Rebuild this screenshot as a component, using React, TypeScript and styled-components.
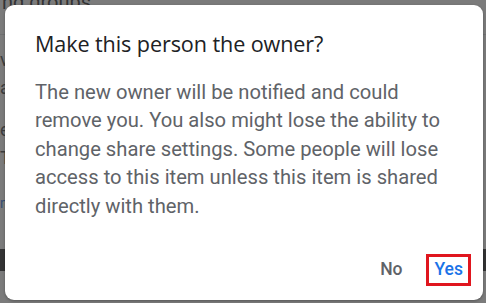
import { createGlobalStyle, styled } from "styled-components";

const GlobalStyle = createGlobalStyle`
  html, body {
    margin: 0;
    padding: 0;
    width: 486px;
    height: 303px;
    overflow: hidden;
    background: #7c7c7c;
    font-family: Roboto, "Liberation Sans", Arial, sans-serif;
  }
`;

const Page = styled.div`
  position: relative;
  width: 486px;
  height: 303px;
  overflow: hidden;
  background: #ffffff;
`;

const PageContent = styled.div`
  display: flex;
  flex-direction: column;
  height: 100%;
`;

const PageHeading = styled.div`
  margin-top: -9px;
  padding-left: 2px;
  font-size: 20px;
  line-height: 22px;
  color: #202124;
`;

const Divider = styled.div`
  margin-top: 21px;
  height: 1px;
  background: #dadce0;
`;

const PageLines = styled.div`
  display: flex;
  flex-direction: column;
  gap: 14px;
  padding: 18px 0 0 0;
  font-size: 18px;
  color: #3c4043;
  line-height: 14px;
`;

const PageLink = styled.div`
  margin-top: 30px;
  font-size: 14px;
  color: #1a73e8;
`;

const DarkBar = styled.div`
  margin-top: 38px;
  height: 22px;
  background: #202124;
`;

const Overlay = styled.div`
  position: absolute;
  inset: 0;
  background: rgba(60, 60, 60, 0.68);
  display: flex;
  padding: 5px 3px 3px 5px;
  box-sizing: border-box;
`;

const Dialog = styled.div`
  flex: 1;
  background: #ffffff;
  border-radius: 9px;
  padding: 25px 12px 14px 30px;
  display: flex;
  flex-direction: column;
  box-sizing: border-box;
  box-shadow: 0 1px 3px rgba(0, 0, 0, 0.3);
`;

const Title = styled.h2`
  margin: 0;
  font-family: "Open Sans", Roboto, sans-serif;
  font-weight: 400;
  font-size: 21.6px;
  line-height: 28px;
  color: #202124;
  letter-spacing: -0.1px;
`;

const Body = styled.p`
  margin: 20px 0 0 0;
  max-width: 410px;
  font-size: 20.2px;
  line-height: 28.4px;
  color: #5f6368;
`;

const Actions = styled.div`
  margin-top: auto;
  display: flex;
  justify-content: flex-end;
  align-items: center;
  gap: 16px;
`;

const ActionButton = styled.button<{ $primary?: boolean; $marked?: boolean }>`
  font-family: Roboto, "Liberation Sans", sans-serif;
  font-size: 17.5px;
  font-weight: 500;
  background: none;
  cursor: pointer;
  color: ${(p) => (p.$primary ? "#1a73e8" : "#5f6368")};
  border: 3px solid ${(p) => (p.$marked ? "#e0161e" : "transparent")};
  padding: 2px 5px 3px 5px;
  line-height: 21px;
`;

const App = (): React.ReactElement => {
  return (
    <>
      <GlobalStyle />
      <Page>
        <PageContent>
          <PageHeading>nd groups</PageHeading>
          <Divider />
          <PageLines>
            <span>v:</span>
            <span>a</span>
            <span> </span>
            <span>e</span>
            <span>T</span>
          </PageLines>
          <PageLink>m</PageLink>
          <DarkBar />
        </PageContent>
        <Overlay>
          <Dialog>
            <Title>Make this person the owner?</Title>
            <Body>
              The new owner will be notified and could remove you. You also
              might lose the ability to change share settings. Some people will
              lose access to this item unless this item is shared directly with
              them.
            </Body>
            <Actions>
              <ActionButton>No</ActionButton>
              <ActionButton $primary $marked>
                Yes
              </ActionButton>
            </Actions>
          </Dialog>
        </Overlay>
      </Page>
    </>
  );
};

export default App;
